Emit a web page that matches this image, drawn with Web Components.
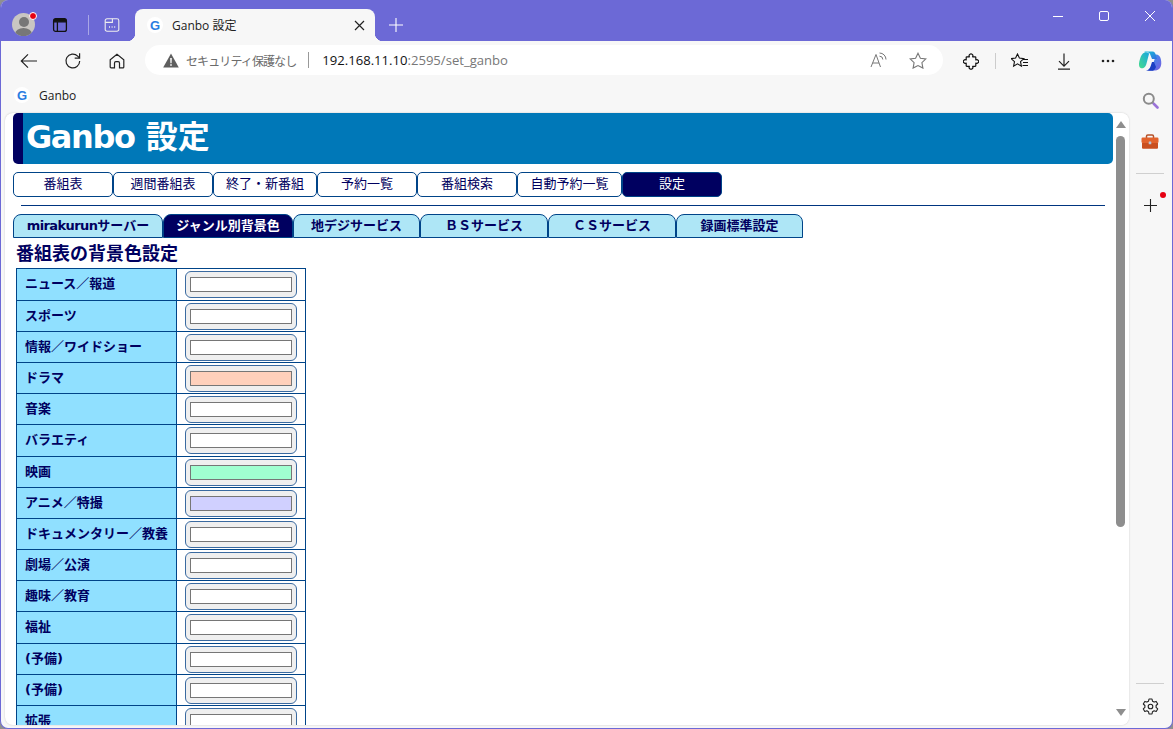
<!DOCTYPE html>
<html lang="ja">
<head>
<meta charset="utf-8">
<title>Ganbo 設定</title>
<style>
html, body { margin: 0; height: 100%; overflow: hidden; background: #8f8f8f; }
body { font-family: "DejaVu Sans", "Noto Sans CJK JP", sans-serif; }
</style>
</head>
<body>
<browser-window>
  <title-strip slot="strip" tab-title="Ganbo 設定"></title-strip>
  <tool-bar slot="tools"></tool-bar>
  <fav-bar slot="favs"></fav-bar>
  <page-view slot="page">
    <page-header><span style="letter-spacing:-1.4px">Ganbo</span> 設定</page-header>
    <nav-list>
      <nav-item w="100">番組表</nav-item>
      <nav-item w="100">週間番組表</nav-item>
      <nav-item w="104">終了・新番組</nav-item>
      <nav-item w="100">予約一覧</nav-item>
      <nav-item w="100">番組検索</nav-item>
      <nav-item w="105">自動予約一覧</nav-item>
      <nav-item w="100" active>設定</nav-item>
    </nav-list>
    <tab-list>
      <tab-item w="150"><span style="letter-spacing:-.6px">mirakurun</span>サーバー</tab-item>
      <tab-item w="130" active>ジャンル別背景色</tab-item>
      <tab-item w="127">地デジサービス</tab-item>
      <tab-item w="128">ＢＳサービス</tab-item>
      <tab-item w="128">ＣＳサービス</tab-item>
      <tab-item w="127">録画標準設定</tab-item>
    </tab-list>
    <genre-table heading="番組表の背景色設定">
      <genre-row>ニュース／報道</genre-row>
      <genre-row>スポーツ</genre-row>
      <genre-row>情報／ワイドショー</genre-row>
      <genre-row color="#ffd0bb">ドラマ</genre-row>
      <genre-row>音楽</genre-row>
      <genre-row>バラエティ</genre-row>
      <genre-row color="#a0ffd0">映画</genre-row>
      <genre-row color="#d0d0ff">アニメ／特撮</genre-row>
      <genre-row>ドキュメンタリー／教養</genre-row>
      <genre-row>劇場／公演</genre-row>
      <genre-row>趣味／教育</genre-row>
      <genre-row>福祉</genre-row>
      <genre-row>(予備)</genre-row>
      <genre-row>(予備)</genre-row>
      <genre-row>拡張</genre-row>
    </genre-table>
  </page-view>
  <side-bar slot="side"></side-bar>
</browser-window>

<script>
const ICONS = {
  gfav: `<svg width="16" height="16" viewBox="0 0 16 16"><circle cx="8" cy="8" r="8" fill="#fff"/><text x="8" y="12.5" text-anchor="middle" font-family="Liberation Sans" font-weight="700" font-size="13" fill="#2a7de1">G</text></svg>`,
  vtabs: `<svg width="16" height="16" viewBox="0 0 16 16" fill="none" stroke="#111" stroke-width="1.3"><rect x="1.6" y="1.6" width="12.8" height="12.8" rx="2"/><path d="M1.6 4.8h12.8M5.4 4.8v9.6"/><path d="M2 2h12v2.8H2z" fill="#111" stroke="none"/></svg>`,
  work: `<svg width="16" height="16" viewBox="0 0 16 16" fill="none" stroke="#eee" stroke-width="1.1"><path d="M3 1.8h10a1.8 1.8 0 0 1 1.8 1.8v8.8a1.8 1.8 0 0 1-1.8 1.8H3a1.8 1.8 0 0 1-1.8-1.8V3.6A1.8 1.8 0 0 1 3 1.8z"/><path d="M1.2 5.4h7.2V1.8"/><path d="M5 10h1M7.6 10h1M10.2 10h1" stroke-width="1.4"/></svg>`,
  close: `<svg width="11" height="11" viewBox="0 0 11 11" stroke="#222" stroke-width="1.2"><path d="M1 1l9 9M10 1l-9 9"/></svg>`,
  plus: `<svg width="14" height="14" viewBox="0 0 14 14" stroke="#fff" stroke-width="1.1"><path d="M7 0v14M0 7h14"/></svg>`,
  min: `<svg width="10" height="10" viewBox="0 0 10 10" stroke="#fff"><path d="M0 5.5h10"/></svg>`,
  max: `<svg width="10" height="10" viewBox="0 0 10 10" fill="none" stroke="#fff"><rect x=".5" y=".5" width="9" height="9" rx="1.5"/></svg>`,
  x: `<svg width="10" height="10" viewBox="0 0 10 10" stroke="#fff"><path d="M0 0l10 10M10 0L0 10"/></svg>`,
  back: `<svg width="18" height="16" viewBox="0 0 18 16" fill="none" stroke="#222" stroke-width="1.2"><path d="M17 8H1.5M8 1.3L1.3 8 8 14.7"/></svg>`,
  reload: `<svg width="18" height="18" viewBox="0 0 18 18" fill="none" stroke="#222" stroke-width="1.2"><path d="M15.7 9a6.9 6.9 0 1 1-2-4.9l1.8 1.9"/><path d="M15.6 1.3v4.9h-4.9"/></svg>`,
  home: `<svg width="16" height="16" viewBox="0 0 16 16" fill="none" stroke="#222" stroke-width="1.2"><path d="M8 1.2L1.2 6.8v7.1a.9.9 0 0 0 .9.9h3.4V10a1.4 1.4 0 0 1 1.4-1.4h2.2a1.4 1.4 0 0 1 1.4 1.4v4.8h3.4a.9.9 0 0 0 .9-.9V6.8z"/></svg>`,
  warn: `<svg width="16" height="15" viewBox="0 0 16 15"><path d="M8 .5l7.8 14H.2z" fill="#5f5f5f"/><path d="M7.2 5h1.600l-.2 5.200H7.400zM7.200 11.200h1.600v1.500H7.200z" fill="#fff"/></svg>`,
  read: `<svg width="17" height="16" viewBox="0 0 17 16" fill="none" stroke="#777" stroke-width="1"><path d="M1 15L6 2.500 10.500 15M2.600 11h6.400"/><path d="M9.500 1a6.500 6.500 0 0 1 6.500 6.500M9.500 4.200a3.300 3.300 0 0 1 3.300 3.300"/></svg>`,
  star: `<svg width="18" height="17" viewBox="0 0 18 17" fill="none" stroke="#777" stroke-width="1.1"><path d="M9 1.200l2.400 5 5.500.7-4 3.800 1 5.400L9 13.500l-4.900 2.600 1-5.400-4-3.800 5.500-.7z"/></svg>`,
  ext: `<svg width="16" height="17" viewBox="-.5 -.5 17 17" fill="none" stroke="#111" stroke-width="1.25" stroke-linejoin="round"><path d="M6.300 3a2 2 0 1 1 3.400 0H12.500a.6.6 0 0 1 .6.6V6.300a2 2 0 1 1 0 3.400v2.800a.6.6 0 0 1-.6.6H9.700a2 2 0 1 1-3.400 0H3.500a.6.6 0 0 1-.6-.6V9.700a2 2 0 1 1 0-3.400V3.600a.6.6 0 0 1 .6-.6z"/></svg>`,
  favs: `<svg width="18" height="16" viewBox="0 0 18 16" fill="none" stroke="#111" stroke-width="1.1"><path d="M6.500 1l1.900 4.100 4.400.5-3.300 3 .9 4.500-3.900-2.300-3.900 2.300.9-4.500-3.300-3 4.400-.5z"/><path d="M12 6.500h5M12 9.500h5M11.500 12.500h5.500"/></svg>`,
  down: `<svg width="14" height="17" viewBox="0 0 14 17" fill="none" stroke="#222" stroke-width="1.2"><path d="M7 .5V13M2 8.200l5 5 5-5M1 16.200h12"/></svg>`,
  more: `<svg width="14" height="4" viewBox="0 0 14 4" fill="#222"><circle cx="2" cy="2" r="1.3"/><circle cx="7" cy="2" r="1.3"/><circle cx="12" cy="2" r="1.3"/></svg>`,
  copilot: `<svg width="24" height="22" viewBox="0 0 24 22"><defs><linearGradient id="c1" x1="0" y1="0" x2="1" y2="1"><stop offset="0" stop-color="#17c3d8"/><stop offset="1" stop-color="#2f6fe0"/></linearGradient><linearGradient id="c2" x1="0" y1="1" x2="1" y2="0"><stop offset="0" stop-color="#45dc8c"/><stop offset="1" stop-color="#18a6e0"/></linearGradient><linearGradient id="c3" x1="0" y1="0" x2="1" y2="1"><stop offset="0" stop-color="#2a9bf0"/><stop offset="1" stop-color="#7c5ce0"/></linearGradient></defs><path d="M6.500 2.500C4 3.500 3 6 2 9s-1.500 6-.5 8c.8 1.300 2.500 1.500 4 1 1.500-.5 2.500-2.500 3-4.500L11 4C11 3 9 1.800 6.500 2.500z" fill="url(#c2)"/><path d="M17 4.500c3-.5 5 1 5.800 4.500.7 3 .7 6-.3 8-1 2-3 3.500-5.500 3.500h-7c2-.5 3.500-2 4.200-4L17 8z" fill="url(#c3)"/><path d="M6.500 1.500h8c2 0 2.700 1.500 3.300 3.500l1.200 4h-5l-2-5c-.5-1.300-2-2-4-1.800-1 .1-1.500 0-1.500-.7z" fill="url(#c1)"/><path d="M8 20.800h7c1.500-.8 2.500-2.300 3-3.800l-2-5h-2l-1.500 4.500c-.7 2-2.500 4-4.500 4.300z" fill="#1c3fc4"/></svg>`,
  search: `<svg width="17" height="17" viewBox="0 0 17 17" fill="none"><circle cx="6.800" cy="6.800" r="5" stroke="#8b8b8b" stroke-width="2"/><path d="M10.500 10.500l1.500 1.500" stroke="#8b8b8b" stroke-width="2"/><path d="M12 12l3.500 3.500" stroke="#9a73d8" stroke-width="2.600" stroke-linecap="round"/></svg>`,
  toolbox: `<svg width="18" height="16" viewBox="0 0 18 16"><path d="M5.500 4V2.300C5.500 1.500 6 1 6.800 1h4.400c.8 0 1.300.5 1.300 1.300V4" fill="none" stroke="#b5522a" stroke-width="1.500"/><rect x=".5" y="3.500" width="17" height="5.500" rx="1.200" fill="#e2622c"/><path d="M1 9h16v4.500c0 .8-.5 1.300-1.300 1.300H2.300C1.500 14.800 1 14.300 1 13.500z" fill="#c94f1f"/><rect x="7.700" y="7.500" width="2.600" height="2.800" rx=".5" fill="#b9c4d6"/></svg>`,
  splus: `<svg width="13" height="13" viewBox="0 0 13 13" stroke="#222" stroke-width="1.1"><path d="M6.500 0v13M0 6.500h13"/></svg>`,
  gear: `<svg width="17" height="17" viewBox="0 0 17 17" fill="none" stroke="#222" stroke-width="1.1"><circle cx="8.500" cy="8.500" r="2.300"/><path d="M7 1h3l.5 2.200 1.600.9 2.100-.7 1.500 2.600-1.600 1.500v1.900l1.600 1.500-1.500 2.600-2.100-.7-1.600.9L10 16H7l-.5-2.300-1.600-.9-2.100.7-1.500-2.600 1.600-1.500V7.500L1.300 6l1.500-2.600 2.100.7 1.600-.9z" stroke-linejoin="round"/></svg>`
}

class UiIcon extends HTMLElement {
    constructor() {
        super()
        const root = this.attachShadow({ mode: 'open' })
        const w = this.getAttribute('w') || 44
        root.innerHTML = `<style>:host { display: flex; flex: none; width: ${w}px; align-items: center; justify-content: center; position: relative; } svg { display: block; }</style>${ICONS[this.getAttribute('name')]}<slot></slot>`
    }
}
customElements.define('ui-icon', UiIcon)

const windowTemplate = document.createElement('template')
windowTemplate.innerHTML = `
<style>
:host { display: flex; flex-direction: column; box-sizing: border-box; width: 1173px; height: 729px; background: #f7f7f7; border: solid #6c69d6; border-width: 0 1px 1px; border-radius: 8px; overflow: hidden; }
.body { flex: 1; display: flex; min-height: 0; padding-left: 4px; }
</style>
<slot name="strip"></slot>
<slot name="tools"></slot>
<slot name="favs"></slot>
<div class="body"><slot name="page"></slot><slot name="side"></slot></div>
`
class BrowserWindow extends HTMLElement {
    constructor() {
        super()
        this.attachShadow({ mode: 'open' }).appendChild(windowTemplate.content.cloneNode(true))
    }
}
customElements.define('browser-window', BrowserWindow)

class TitleStrip extends HTMLElement {
    constructor() {
        super()
        this.attachShadow({ mode: 'open' }).innerHTML = `
<style>
:host { display: flex; flex: none; height: 41px; margin: 0 -1px; background: #6c69d6; align-items: stretch; }
.wrap { position: relative; flex: none; width: 23px; height: 23px; margin: 13px 10px 0 12px; }
.avatar { position: absolute; inset: 0; border-radius: 50%; background: #c9c6c2; overflow: hidden; }
.head { position: absolute; left: 7px; top: 4px; width: 10px; height: 10px; border-radius: 50%; background: #777; }
.shoulders { position: absolute; left: 3px; top: 15px; width: 17px; height: 12px; border-radius: 50%; background: #777; }
.dot { position: absolute; left: 17px; top: -1px; width: 6px; height: 6px; border-radius: 50%; background: #e60012; border: 1px solid #fff; }
.low { margin-top: 9px; }
.vtabs { width: 30px; margin-right: 13px; }
.sep { flex: none; width: 1px; height: 20px; margin-top: 15px; background: #a9a7e6; }
.tab { position: relative; flex: none; box-sizing: border-box; width: 240px; height: 32px; margin: 9px 0 0 0; background: #f7f7f7; border-radius: 8px 8px 0 0; display: flex; align-items: center; padding-left: 12px; font: 12px "Open Sans", "Noto Sans CJK JP", sans-serif; color: #222; }
.tab::before, .tab::after { content: ""; position: absolute; bottom: 0; width: 8px; height: 8px; }
.tab::before { left: -8px; background: radial-gradient(circle at 0 0, #6c69d6 8px, #f7f7f7 8.5px); }
.tab::after { right: -8px; background: radial-gradient(circle at 100% 0, #6c69d6 8px, #f7f7f7 8.5px); }
.label { margin-left: 9px; flex: 1; }
.controls { margin-left: auto; display: flex; height: 32px; }
</style>
<div class="wrap"><div class="avatar"><div class="head"></div><div class="shoulders"></div></div><div class="dot"></div></div>
<ui-icon name="vtabs" class="vtabs low"></ui-icon>
<div class="sep"></div>
<ui-icon name="work" w="46" class="low"></ui-icon>
<div class="tab"><ui-icon name="gfav" w="16"></ui-icon><span class="label">${this.getAttribute('tab-title')}</span><ui-icon name="close" w="32"></ui-icon></div>
<ui-icon name="plus" w="42" class="low"></ui-icon>
<div class="controls"><ui-icon name="min" w="46"></ui-icon><ui-icon name="max" w="46"></ui-icon><ui-icon name="x" w="46"></ui-icon></div>
`
    }
}
customElements.define('title-strip', TitleStrip)

class ToolBar extends HTMLElement {
    constructor() {
        super()
        this.attachShadow({ mode: 'open' }).innerHTML = `
<style>
:host { display: flex; flex: none; height: 40px; align-items: stretch; padding-left: 6px; }
.address { flex: none; width: 798px; height: 30px; margin: 4px 6px 0; background: #fff; border-radius: 15px; display: flex; align-items: center; box-sizing: border-box; padding-left: 17px; font: 13px "Open Sans", "Noto Sans CJK JP", sans-serif; color: #6b6b6b; }
.notice { margin-left: 6px; font-family: "Noto Sans CJK JP", sans-serif; font-size: 12px; letter-spacing: -.9px; white-space: nowrap; }
.pipe { width: 1px; height: 16px; margin: 0 13px 0 12px; background: #999; flex: none; }
.url { color: #777; white-space: nowrap; flex: 1; font-size: 13.1px; }
.url b { font-weight: 400; color: #111; }
.sep { flex: none; width: 1px; height: 16px; margin: 12px 2px 0; background: #ccc; }
</style>
<ui-icon name="back"></ui-icon>
<ui-icon name="reload"></ui-icon>
<ui-icon name="home"></ui-icon>
<div class="address">
  <ui-icon name="warn" w="18"></ui-icon>
  <span class="notice">セキュリティ保護なし</span>
  <span class="pipe"></span>
  <span class="url"><b>192.168.11.10</b>:2595/set_ganbo</span>
  <ui-icon name="read" w="40"></ui-icon>
  <ui-icon name="star" w="40"></ui-icon>
  <span style="width:5px"></span>
</div>
<ui-icon name="ext"></ui-icon>
<div class="sep"></div>
<ui-icon name="favs"></ui-icon>
<ui-icon name="down"></ui-icon>
<ui-icon name="more"></ui-icon>
<ui-icon name="copilot" w="40"></ui-icon>
`
    }
}
customElements.define('tool-bar', ToolBar)

class FavBar extends HTMLElement {
    constructor() {
        super()
        this.attachShadow({ mode: 'open' }).innerHTML = `
<style>
:host { display: flex; flex: none; box-sizing: border-box; height: 32px; padding: 0 0 4px 13px; align-items: center; font: 12px "Open Sans", sans-serif; color: #222; }
span { margin-left: 9px; }
</style>
<ui-icon name="gfav" w="16"></ui-icon><span>Ganbo</span>
`
    }
}
customElements.define('fav-bar', FavBar)

const pageTemplate = document.createElement('template')
pageTemplate.innerHTML = `
<style>
:host { display: flex; flex: none; width: 1124px; background: #fff; border-radius: 8px; overflow: hidden; box-shadow: 0 0 2px rgba(0,0,0,.2); margin-bottom: 3px; }
.content { flex: 1; min-width: 0; overflow: hidden; padding: 0 1px 0 8px; }
.scroll { flex: none; box-sizing: border-box; width: 15px; padding-right: 2px; display: flex; flex-direction: column; align-items: center; background: #fff; }
.up, .down { flex: none; width: 0; height: 0; border-left: 5px solid transparent; border-right: 5px solid transparent; }
.up { border-bottom: 7px solid #8e8e8e; margin: 8px 0 0; }
.down { border-top: 7px solid #8e8e8e; margin-bottom: 9px; }
.track { flex: 1; width: 100%; padding: 8px 0 0; box-sizing: border-box; }
.thumb { width: 9px; height: 391px; margin: 0 auto; background: #8e8e8e; border-radius: 5px; }
</style>
<div class="content"><slot></slot></div>
<div class="scroll"><div class="up"></div><div class="track"><div class="thumb"></div></div><div class="down"></div></div>
`
class PageView extends HTMLElement {
    constructor() {
        super()
        this.attachShadow({ mode: 'open' }).appendChild(pageTemplate.content.cloneNode(true))
    }
}
customElements.define('page-view', PageView)

class PageHeader extends HTMLElement {
    constructor() {
        super()
        this.attachShadow({ mode: 'open' }).innerHTML = `
<style>
:host { display: block; box-sizing: border-box; height: 51px; background: #0078b8; border-left: 10px solid #000060; border-radius: 5px; padding-left: 3px; color: #fff; font: 700 32px/48px "DejaVu Sans", "Noto Sans CJK JP", sans-serif; }
</style><slot></slot>
`
    }
}
customElements.define('page-header', PageHeader)

class NavList extends HTMLElement {
    constructor() {
        super()
        this.attachShadow({ mode: 'open' }).innerHTML = `
<style>
:host { display: flex; margin-top: 8px; padding-bottom: 8px; }
</style><slot></slot>
`
    }
}
customElements.define('nav-list', NavList)

class NavItem extends HTMLElement {
    constructor() {
        super()
        this.attachShadow({ mode: 'open' }).innerHTML = `
<style>
:host { display: block; flex: none; box-sizing: border-box; width: ${this.getAttribute('w')}px; height: 25px; border: 1px solid #004488; border-radius: 5px; background: #fff; color: #000060; text-align: center; font: 13px/22px "DejaVu Sans", "Noto Sans CJK JP", sans-serif; }
:host([active]) { background: #000060; color: #fff; }
</style><slot></slot>
`
    }
}
customElements.define('nav-item', NavItem)

class TabList extends HTMLElement {
    constructor() {
        super()
        this.attachShadow({ mode: 'open' }).innerHTML = `
<style>
:host { display: block; }
hr { height: 1px; margin: 0 8px; border: 0; background: #003580; }
.tabs { display: flex; margin-top: 8px; }
</style>
<hr><div class="tabs"><slot></slot></div>
`
    }
}
customElements.define('tab-list', TabList)

class TabItem extends HTMLElement {
    constructor() {
        super()
        this.attachShadow({ mode: 'open' }).innerHTML = `
<style>
:host { display: block; flex: none; box-sizing: border-box; width: ${this.getAttribute('w')}px; height: 24px; border: 1px solid #004488; border-radius: 8px 8px 0 0; background: #aee6f6; color: #000060; text-align: center; font: 700 13px/22px "DejaVu Sans", "Noto Sans CJK JP", sans-serif; white-space: nowrap; }
:host([active]) { background: #000060; color: #fff; }
</style><slot></slot>
`
    }
}
customElements.define('tab-item', TabItem)

class GenreTable extends HTMLElement {
    constructor() {
        super()
        this.attachShadow({ mode: 'open' }).innerHTML = `
<style>
:host { display: block; padding-left: 3px; }
h2 { margin: 0; height: 30px; font: 700 18px/31px "DejaVu Sans", "Noto Sans CJK JP", sans-serif; color: #000060; }
.rows { width: 290px; border-top: 1px solid #004488; padding-top: .4px; }
</style>
<h2>${this.getAttribute('heading')}</h2>
<div class="rows"><slot></slot></div>
`
    }
}
customElements.define('genre-table', GenreTable)

const rowTemplate = document.createElement('template')
rowTemplate.innerHTML = `
<style>
:host { display: grid; grid-template-columns: 160px 128px; box-sizing: border-box; height: 31.2px; border: solid #004488; border-width: 0 1px 1px; }
.name { box-sizing: border-box; background: #90e0ff; border-right: 1px solid #004488; padding-left: 8px; font: 700 13px/29px "DejaVu Sans", "Noto Sans CJK JP", sans-serif; color: #000060; white-space: nowrap; overflow: hidden; }
.value { padding: 2px 0 0 8px; }
.field { box-sizing: border-box; width: 112px; height: 27px; padding: 5px 4px 0; background: #efefef; border: 1px solid #3a6aa0; border-radius: 6px; }
.swatch { box-sizing: border-box; height: 15px; border: 1px solid #767676; background: var(--swatch, #fff); }
</style>
<div class="name"><slot></slot></div>
<div class="value"><div class="field"><div class="swatch"></div></div></div>
`
class GenreRow extends HTMLElement {
    constructor() {
        super()
        const root = this.attachShadow({ mode: 'open' })
        root.appendChild(rowTemplate.content.cloneNode(true))
        if (this.hasAttribute('color')) this.style.setProperty('--swatch', this.getAttribute('color'))
    }
}
customElements.define('genre-row', GenreRow)

class SideBar extends HTMLElement {
    constructor() {
        super()
        this.attachShadow({ mode: 'open' }).innerHTML = `
<style>
:host { display: flex; flex: none; width: 42px; flex-direction: column; align-items: center; padding-bottom: 1px; box-sizing: border-box; }
ui-icon { height: 42px; }
.line { flex: none; width: 28px; height: 1px; background: #d0d0d0; }
.dot { position: absolute; right: 6px; top: 8px; width: 6px; height: 6px; border-radius: 50%; background: #e60012; }
.gap { flex: 1; }
</style>
<ui-icon name="search" style="margin-top:-34px"></ui-icon>
<ui-icon name="toolbox"></ui-icon>
<div class="line" style="margin-top:10px"></div>
<ui-icon name="splus" style="margin-top:10px"><span class="dot"></span></ui-icon>
<div class="gap"></div>
<div class="line"></div>
<ui-icon name="gear" style="margin-top:1px"></ui-icon>
`
    }
}
customElements.define('side-bar', SideBar)
</script>
</body>
</html>
